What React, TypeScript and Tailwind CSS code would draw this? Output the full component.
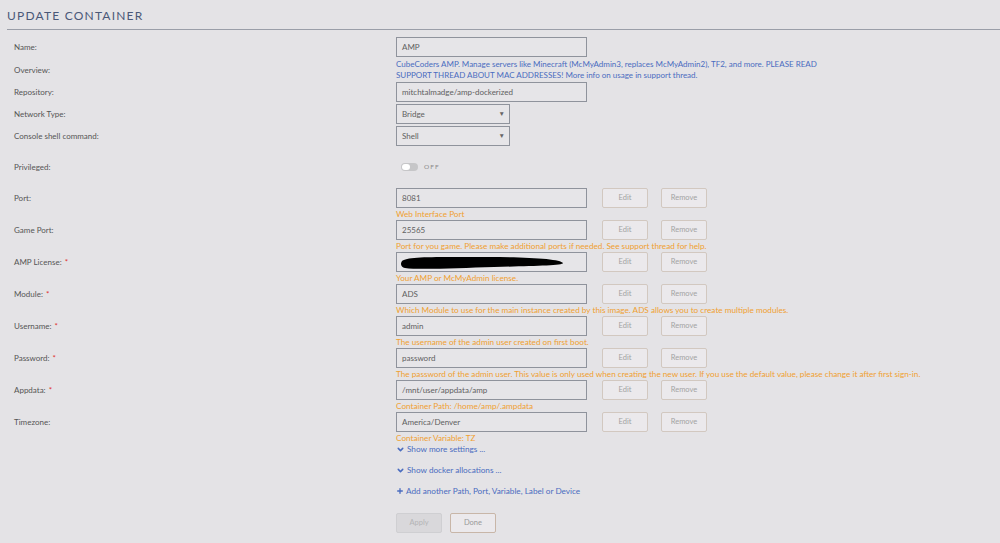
import { ChevronDown, Plus } from "lucide-react";

const font = { fontFamily: '"Lato", "Liberation Sans", sans-serif' };

function Label({ text, required }: { text: string; required?: boolean }) {
    return (
        <div className="w-[382px] shrink-0 h-[20px] leading-[20px] text-[8px] text-[#555]">
            {text}
            {required && <span className="text-[#e03030] ml-[3px]">*</span>}
        </div>
    );
}

function TextBox({ value, children }: { value?: string; children?: React.ReactNode }) {
    return (
        <div className="relative w-[191px] h-[20px] border border-[#8f939c] bg-[#e6e5e8] px-[5px] text-[8px] leading-[18px] text-[#606060]">
            {value}
            {children}
        </div>
    );
}

function SelectBox({ value }: { value: string }) {
    return (
        <div className="relative w-[114px] h-[20px] border border-[#8f939c] bg-[#e6e5e8] px-[5px] text-[8px] leading-[18px] text-[#606060]">
            {value}
            <span className="absolute right-[4px] top-0 text-[6.5px] text-[#666]">▼</span>
        </div>
    );
}

function SmallButton({ children }: { children: React.ReactNode }) {
    return (
        <div className="w-[46px] h-[20px] rounded-[2px] border border-[#d2c8c0] bg-[#ebe9ec] text-center text-[7.5px] leading-[18px] text-[#a3a3a3]">
            {children}
        </div>
    );
}

function ConfigRow({ label, value, desc, required, redacted }: { label: string; value?: string; desc: string; required?: boolean; redacted?: boolean }) {
    return (
        <div className="flex">
            <Label text={label} required={required} />
            <div className="flex flex-col">
                <div className="flex items-center">
                    <TextBox value={value}>
                        {redacted && (
                            <svg className="absolute left-[2px] top-[1px]" width="170" height="17" viewBox="0 0 170 17">
                                <path d="M3 7 C 8 2, 40 3, 90 3 C 130 3, 162 5, 164 9 C 165 12, 130 12, 95 13 C 60 14, 20 16, 6 14 C 2 13, 1 10, 3 7 Z" fill="#000" />
                            </svg>
                        )}
                    </TextBox>
                    <div className="ml-[15px]"><SmallButton>Edit</SmallButton></div>
                    <div className="ml-[13px]"><SmallButton>Remove</SmallButton></div>
                </div>
                <div className="h-[12px] text-[8.2px] leading-[12px] text-[#f0a030] whitespace-nowrap">{desc}</div>
            </div>
        </div>
    );
}

export default function App() {
    return (
        <div className="w-[1000px] h-[543px] overflow-hidden bg-[#e4e3e6]" style={font}>
            <div className="pl-[7px] pt-[6px]">
                <h1 className="h-[23px] text-[12px] leading-[19px] tracking-[1.2px] text-[#4a5878]">UPDATE CONTAINER</h1>
                <div className="h-px bg-[#9a9ea8]" />
            </div>

            <div className="pl-[14px] pt-[7px] flex flex-col">
                <div className="flex mb-[2px]">
                    <Label text="Name:" />
                    <TextBox value="AMP" />
                </div>
                <div className="flex">
                    <div className="w-[382px] shrink-0 h-[22px] leading-[22px] text-[8px] text-[#555]">Overview:</div>
                    <div className="text-[8px] leading-[11px] text-[#4a6cc0] w-[430px]">
                        CubeCoders AMP. Manage servers like Minecraft (McMyAdmin3, replaces McMyAdmin2), TF2, and more. PLEASE READ SUPPORT THREAD ABOUT MAC ADDRESSES! More info on usage in support thread.
                    </div>
                </div>
                <div className="flex mt-[1px] mb-[2px]">
                    <Label text="Repository:" />
                    <TextBox value="mitchtalmadge/amp-dockerized" />
                </div>
                <div className="flex mb-[2px]">
                    <Label text="Network Type:" />
                    <SelectBox value="Bridge" />
                </div>
                <div className="flex">
                    <Label text="Console shell command:" />
                    <SelectBox value="Shell" />
                </div>

                <div className="flex h-[42px] items-center">
                    <div className="w-[382px] shrink-0 text-[8px] text-[#555]">Privileged:</div>
                    <div className="flex items-center ml-[5px]">
                        <div className="w-[17px] h-[8px] rounded-full bg-[#c6c6c8] p-[1px]">
                            <div className="w-[8px] h-[6px] rounded-full bg-white" />
                        </div>
                        <span className="ml-[6px] text-[6.5px] tracking-[1px] text-[#8a8a8a]">OFF</span>
                    </div>
                </div>

                <ConfigRow label="Port:" value="8081" desc="Web Interface Port" />
                <ConfigRow label="Game Port:" value="25565" desc="Port for you game. Please make additional ports if needed. See support thread for help." />
                <ConfigRow label="AMP License:" required redacted desc="Your AMP or McMyAdmin license." />
                <ConfigRow label="Module:" required value="ADS" desc="Which Module to use for the main instance created by this image. ADS allows you to create multiple modules." />
                <ConfigRow label="Username:" required value="admin" desc="The username of the admin user created on first boot." />
                <ConfigRow label="Password:" required value="password" desc="The password of the admin user. This value is only used when creating the new user. If you use the default value, please change it after first sign-in." />
                <ConfigRow label="Appdata:" required value="/mnt/user/appdata/amp" desc="Container Path: /home/amp/.ampdata" />
                <ConfigRow label="Timezone:" value="America/Denver" desc="Container Variable: TZ" />

                <div className="ml-[382px] flex flex-col text-[8.2px] text-[#4a6cc0]">
                    <div className="flex items-center h-[11px]">
                        <ChevronDown size={9} strokeWidth={4} className="mr-[2px]" />
                        Show more settings ...
                    </div>
                    <div className="flex items-center h-[12px] mt-[9px]">
                        <ChevronDown size={9} strokeWidth={4} className="mr-[2px]" />
                        Show docker allocations ...
                    </div>
                    <div className="flex items-center h-[12px] mt-[9px]">
                        <Plus size={8} strokeWidth={4} className="mr-[2px]" />
                        Add another Path, Port, Variable, Label or Device
                    </div>
                    <div className="flex mt-[16px]">
                        <div className="w-[46px] h-[20px] rounded-[2px] border border-[#cfcfd2] bg-[#d9d8db] text-center text-[7.5px] leading-[18px] text-[#b4b4b6]">Apply</div>
                        <div className="ml-[8px] w-[46px] h-[20px] rounded-[2px] border border-[#c8b6a8] bg-[#ebe9ec] text-center text-[7.5px] leading-[18px] text-[#9a9a9a]">Done</div>
                    </div>
                </div>
            </div>
        </div>
    );
}
